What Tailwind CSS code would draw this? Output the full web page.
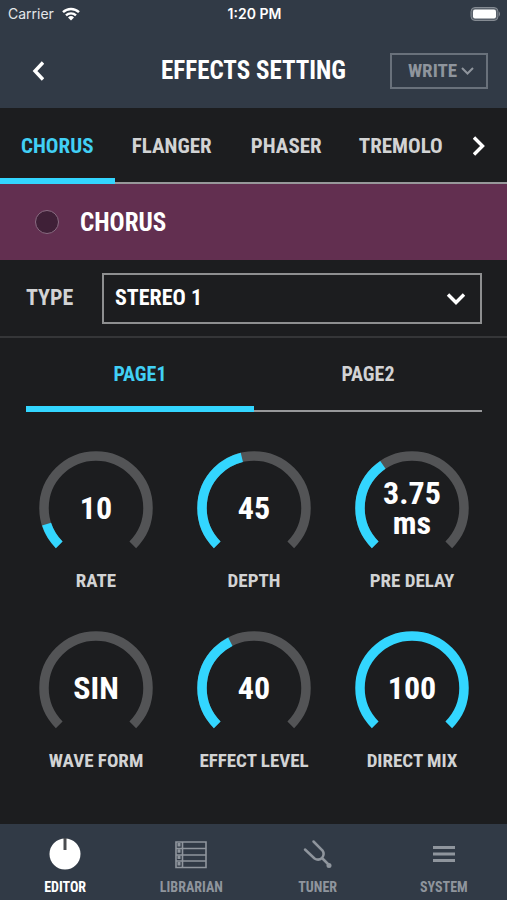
<!DOCTYPE html>
<html lang="en">
  <head>
    <meta charset="UTF-8" />
    <meta name="viewport" content="width=device-width, initial-scale=1.0" />
    <title>Effects Setting</title>
    <script src="https://cdn.jsdelivr.net/npm/@tailwindcss/browser@4"></script>
  </head>
  <body class="bg-[#1c1d1f]">
    <div class="flex min-h-screen flex-col bg-[#1c1d1f] font-['Roboto_Condensed','Liberation_Sans_Narrow',Roboto,sans-serif] font-bold text-[#d2d3d4]">
      <!-- Header -->
      <header class="bg-[#313a46] text-white">
        <div class="grid h-8 grid-cols-3 items-center pr-[6px] pb-1 pl-2 font-[Inter,sans-serif] text-sm font-normal">
          <div class="flex items-center gap-2 text-[#e4e7ea]">
            Carrier
            <svg class="h-[14px] w-[18px]" viewBox="0 0 18 14" fill="none" stroke="#fff" stroke-width="2.4">
              <path d="M1 5.2a11.5 11.5 0 0 1 16 0M4 8.4a7.2 7.2 0 0 1 10 0" />
              <path d="M9 13.6 6 10.5a4.3 4.3 0 0 1 6 0z" fill="#fff" stroke="none" />
            </svg>
          </div>
          <div class="text-center font-semibold">1:20 PM</div>
          <svg class="h-[14px] w-[31px] justify-self-end" viewBox="0 0 31 14">
            <rect x="1" y="0.5" width="27" height="13" rx="4" fill="#59616b" stroke="#858b93" />
            <rect x="3" y="2.5" width="23" height="9" rx="2" fill="#fff" />
            <path d="M29 4.5q2 2.5 0 5z" fill="#858b93" />
          </svg>
        </div>
        <div class="grid h-[76px] grid-cols-[1fr_auto_1fr] items-center px-[19px] pt-[2px]">
          <button aria-label="Back" class="ml-[13px] w-4">
            <svg class="h-5 w-3" viewBox="0 0 12 20" fill="none" stroke="#fff" stroke-width="3.4">
              <path d="M11 1.5 3 10l8 8.5" />
            </svg>
          </button>
          <h1 class="text-[25px] leading-7">EFFECTS SETTING</h1>
          <button class="flex h-9 w-[98px] items-center justify-center gap-1 justify-self-end border-2 border-[#69717b] pl-1 text-[19px] text-[#8f959d]">
            WRITE
            <svg class="h-2 w-[13px]" viewBox="0 0 13 8" fill="none" stroke="currentColor" stroke-width="2">
              <path d="m1 1 5.5 5.5L12 1" />
            </svg>
          </button>
        </div>
      </header>

      <!-- Effect tabs -->
      <nav class="flex h-[76px] text-[21px]">
        <div class="grid flex-1 grid-cols-4">
          <button class="border-b-6 border-[#33d6ff] pt-2 text-[#41d0f5]">CHORUS</button>
          <button class="border-b-2 border-[#97989a] pt-2 pb-1">FLANGER</button>
          <button class="border-b-2 border-[#97989a] pt-2 pb-1">PHASER</button>
          <button class="border-b-2 border-[#97989a] pt-2 pb-1">TREMOLO</button>
        </div>
        <button aria-label="Next effects" class="flex w-[49px] items-center justify-center border-b-2 border-[#97989a] pt-[2px] pr-2">
          <svg class="h-5 w-3" viewBox="0 0 12 20" fill="none" stroke="#fff" stroke-width="3.4">
            <path d="M1 1.5 9.5 10 1 18.5" />
          </svg>
        </button>
      </nav>

      <!-- Selected effect -->
      <section class="flex h-[76px] items-center gap-[21px] bg-[#622f50] pl-[35px] text-[25px] text-white">
        <button aria-label="Chorus on/off" class="size-6 rounded-full border border-[#8a6c82] bg-[#3f2037]"></button>
        <h2 class="pt-[2px]">CHORUS</h2>
      </section>

      <section class="flex h-[78px] items-center border-b-2 border-[#353638] pr-[25px] pl-[26px] text-[22px]">
        <label for="type" class="w-[76px] shrink-0 pb-[2px]">TYPE</label>
        <div class="relative flex-1">
          <select id="type" class="block h-[51px] w-full appearance-none border-2 border-[#8e8f90] bg-transparent pb-[2px] pl-[11px] text-white">
            <option>STEREO 1</option>
          </select>
          <svg class="pointer-events-none absolute top-5 right-4 h-3 w-5" viewBox="0 0 20 12" fill="none" stroke="#fff" stroke-width="3.4">
            <path d="m2 1.5 8 8 8-8" />
          </svg>
        </div>
      </section>

      <!-- Pages -->
      <nav class="mr-[25px] ml-[26px] grid h-[74px] grid-cols-2 text-[20px]">
        <button class="border-b-6 border-[#33d6ff] pt-1 text-[#41d0f5]">PAGE1</button>
        <button class="border-b-2 border-[#97989a] pt-1 pb-1">PAGE2</button>
      </nav>

      <!-- Knobs: the track is 270 of 360 units long -->
      <main class="grid flex-1 grid-cols-3 content-start gap-y-[35px] pt-[39px] pr-4 pb-10 pl-[17px] text-[19px]">
        <div class="flex flex-col items-center">
          <div class="grid size-[114px] place-items-center">
            <svg class="col-start-1 row-start-1 size-[114px]" viewBox="0 0 114 114" fill="none" stroke-width="9.5">
              <circle cx="57" cy="57" r="52" pathLength="360" stroke="#535456" stroke-dasharray="270 90" transform="rotate(135 57 57)" />
              <circle cx="57" cy="57" r="52" pathLength="360" stroke="#33d6ff" stroke-dasharray="27 333" transform="rotate(135 57 57)" />
            </svg>
            <span class="col-start-1 row-start-1 text-[32px] leading-[30px] text-white">10</span>
          </div>
          <h3 class="leading-[31px]">RATE</h3>
        </div>
        <div class="flex flex-col items-center">
          <div class="grid size-[114px] place-items-center">
            <svg class="col-start-1 row-start-1 size-[114px]" viewBox="0 0 114 114" fill="none" stroke-width="9.5">
              <circle cx="57" cy="57" r="52" pathLength="360" stroke="#535456" stroke-dasharray="270 90" transform="rotate(135 57 57)" />
              <circle cx="57" cy="57" r="52" pathLength="360" stroke="#33d6ff" stroke-dasharray="121.5 238.5" transform="rotate(135 57 57)" />
            </svg>
            <span class="col-start-1 row-start-1 text-[32px] leading-[30px] text-white">45</span>
          </div>
          <h3 class="leading-[31px]">DEPTH</h3>
        </div>
        <div class="flex flex-col items-center">
          <div class="grid size-[114px] place-items-center">
            <svg class="col-start-1 row-start-1 size-[114px]" viewBox="0 0 114 114" fill="none" stroke-width="9.5">
              <circle cx="57" cy="57" r="52" pathLength="360" stroke="#535456" stroke-dasharray="270 90" transform="rotate(135 57 57)" />
              <circle cx="57" cy="57" r="52" pathLength="360" stroke="#33d6ff" stroke-dasharray="101 259" transform="rotate(135 57 57)" />
            </svg>
            <span class="col-start-1 row-start-1 w-16 text-center text-[32px] leading-[30px] text-white">3.75 ms</span>
          </div>
          <h3 class="leading-[31px]">PRE DELAY</h3>
        </div>
        <div class="flex flex-col items-center">
          <div class="grid size-[114px] place-items-center">
            <svg class="col-start-1 row-start-1 size-[114px]" viewBox="0 0 114 114" fill="none" stroke-width="9.5">
              <circle cx="57" cy="57" r="52" pathLength="360" stroke="#535456" stroke-dasharray="270 90" transform="rotate(135 57 57)" />
            </svg>
            <span class="col-start-1 row-start-1 text-[32px] leading-[30px] text-white">SIN</span>
          </div>
          <h3 class="leading-[31px]">WAVE FORM</h3>
        </div>
        <div class="flex flex-col items-center">
          <div class="grid size-[114px] place-items-center">
            <svg class="col-start-1 row-start-1 size-[114px]" viewBox="0 0 114 114" fill="none" stroke-width="9.5">
              <circle cx="57" cy="57" r="52" pathLength="360" stroke="#535456" stroke-dasharray="270 90" transform="rotate(135 57 57)" />
              <circle cx="57" cy="57" r="52" pathLength="360" stroke="#33d6ff" stroke-dasharray="108 252" transform="rotate(135 57 57)" />
            </svg>
            <span class="col-start-1 row-start-1 text-[32px] leading-[30px] text-white">40</span>
          </div>
          <h3 class="leading-[31px]">EFFECT LEVEL</h3>
        </div>
        <div class="flex flex-col items-center">
          <div class="grid size-[114px] place-items-center">
            <svg class="col-start-1 row-start-1 size-[114px]" viewBox="0 0 114 114" fill="none" stroke-width="9.5">
              <circle cx="57" cy="57" r="52" pathLength="360" stroke="#33d6ff" stroke-dasharray="270 90" transform="rotate(135 57 57)" />
            </svg>
            <span class="col-start-1 row-start-1 text-[32px] leading-[30px] text-white">100</span>
          </div>
          <h3 class="leading-[31px]">DIRECT MIX</h3>
        </div>
      </main>

      <!-- Bottom bar -->
      <footer class="grid h-[76px] grid-cols-4 bg-[#313a46] pt-3 pl-[2px] text-[14px] leading-5 text-[#8f959d]">
        <a href="#editor" class="flex flex-col items-center gap-[5px] text-white">
          <svg class="size-9" viewBox="0 0 36 36">
            <circle cx="18" cy="18" r="15.5" fill="#fff" />
            <path d="M18 2v12" stroke="#4a4c50" stroke-width="3" />
          </svg>
          EDITOR
        </a>
        <a href="#librarian" class="flex flex-col items-center gap-[5px]">
          <svg class="size-9" viewBox="0 0 36 36" fill="none" stroke="currentColor" stroke-width="1.6">
            <path d="M3 6h30v25.5H3zM3 12.5h30M3 19h30M3 25h30M9.5 6v25.5" />
            <path d="M6 7v24" stroke-width="3" stroke-dasharray="3.5 2.8" />
          </svg>
          LIBRARIAN
        </a>
        <a href="#tuner" class="flex flex-col items-center gap-[5px]">
          <svg class="size-9" viewBox="0 0 36 36" fill="none" stroke="currentColor" stroke-width="2.5" stroke-linecap="round">
            <path d="M5 13.5 14.5 22.5q4 2.5 7.5-.5 3-4 .5-7.500L13.5 5.5M22 22l6 6" />
            <circle cx="29" cy="29.5" r="2.5" fill="currentColor" stroke="none" />
          </svg>
          TUNER
        </a>
        <a href="#system" class="flex flex-col items-center gap-[5px]">
          <svg class="size-9" viewBox="0 0 36 36" stroke="currentColor" stroke-width="3">
            <path d="M7 11.5h22M7 18h22M7 24.5h22" />
          </svg>
          SYSTEM
        </a>
      </footer>
    </div>
  </body>
</html>
